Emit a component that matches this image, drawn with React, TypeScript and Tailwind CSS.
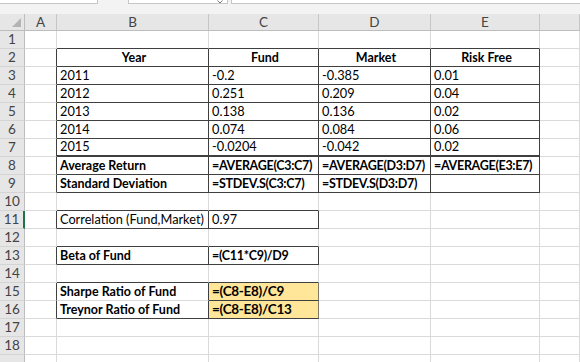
import React from "react";

type Cell = { t?: string; b?: boolean; c?: boolean; fill?: boolean; big?: boolean; f?: boolean };

const COLS = ["A", "B", "C", "D", "E", ""];

const data: Record<number, Record<string, Cell>> = {
  2: { B: { t: "Year", b: true, c: true }, C: { t: "Fund", b: true, c: true }, D: { t: "Market", b: true, c: true }, E: { t: "Risk Free", b: true, c: true } },
  3: { B: { t: "2011" }, C: { t: "-0.2" }, D: { t: "-0.385" }, E: { t: "0.01" } },
  4: { B: { t: "2012" }, C: { t: "0.251" }, D: { t: "0.209" }, E: { t: "0.04" } },
  5: { B: { t: "2013" }, C: { t: "0.138" }, D: { t: "0.136" }, E: { t: "0.02" } },
  6: { B: { t: "2014" }, C: { t: "0.074" }, D: { t: "0.084" }, E: { t: "0.06" } },
  7: { B: { t: "2015" }, C: { t: "-0.0204" }, D: { t: "-0.042" }, E: { t: "0.02" } },
  8: { B: { t: "Average Return", b: true }, C: { t: "=AVERAGE(C3:C7)", b: true, f: true }, D: { t: "=AVERAGE(D3:D7)", b: true, f: true }, E: { t: "=AVERAGE(E3:E7)", b: true, f: true } },
  9: { B: { t: "Standard Deviation", b: true }, C: { t: "=STDEV.S(C3:C7)", b: true, f: true }, D: { t: "=STDEV.S(D3:D7)", b: true, f: true } },
  11: { B: { t: "Correlation (Fund,Market)" }, C: { t: "0.97" } },
  13: { B: { t: "Beta of Fund", b: true }, C: { t: "=(C11*C9)/D9", b: true, f: true } },
  15: { B: { t: "Sharpe Ratio of Fund", b: true }, C: { t: "=(C8-E8)/C9", b: true, fill: true, big: true } },
  16: { B: { t: "Treynor Ratio of Fund", b: true }, C: { t: "=(C8-E8)/C13", b: true, fill: true, big: true } },
};

function rightDark(r: number, c: string): boolean {
  if (r >= 2 && r <= 9) return ["A", "B", "C", "D", "E"].includes(c);
  if (r === 11 || r === 13 || r === 15 || r === 16) return ["A", "B", "C"].includes(c);
  return false;
}
function bottomDark(r: number, c: string): boolean {
  if (r >= 1 && r <= 9) return ["B", "C", "D", "E"].includes(c);
  if (r >= 10 && r <= 14) return ["B", "C"].includes(c);
  if (r === 15) return c === "C";
  if (r === 16) return ["B", "C"].includes(c);
  return false;
}

function GridCell({ r, c }: { r: number; c: string }) {
  const cell = data[r]?.[c];
  const rd = rightDark(r, c);
  const bd = bottomDark(r, c);
  const thick = r === 7 && ["B", "C", "D", "E"].includes(c);
  const orangeRight = cell?.fill;
  const size = cell?.big
    ? "text-[13.5px] tracking-[-0.3px]"
    : cell?.b
    ? cell?.f
      ? "text-[12.5px] tracking-[-0.3px]"
      : "text-[12.5px]"
    : "text-[12.75px]";
  const cls = [
    "flex items-end pb-[1px] overflow-hidden whitespace-nowrap pl-[3px] border-r border-b h-[18px] leading-[15px]",
    orangeRight ? "border-r-[#7f7a68]" : rd ? "border-r-[#3f3f3f]" : "border-r-[#dadada]",
    bd ? "border-b-[#3f3f3f]" : "border-b-[#dadada]",
    thick ? "border-b-2" : "",
    cell?.fill ? "bg-[#ffe699]" : "bg-white",
    cell?.c ? "justify-center" : "",
    cell?.b ? "font-bold" : "",
    size,
  ].join(" ");
  return <div className={cls}>{cell?.t ?? ""}</div>;
}

export default function App() {
  const rows = Array.from({ length: 19 }, (_, i) => i + 1);
  return (
    <div
      className="w-[580px] h-[362px] overflow-hidden bg-white text-black"
      style={{ fontFamily: "Lato, 'Liberation Sans', sans-serif" }}
    >
      {/* top strip */}
      <div className="h-[14px] bg-[#f3f3f3] flex items-start">
        <div className="w-[98px] h-[4px] bg-white border-r border-b border-[#c6c6c6]" />
        <div className="ml-[30px] w-[100px] h-[4px] bg-white border-l border-r border-b border-[#c6c6c6] relative">
          <svg className="absolute left-[88px] top-[0px]" width="6" height="4" viewBox="0 0 6 4">
            <path d="M0.5 0.5 L3 3 L5.5 0.5" fill="none" stroke="#777" strokeWidth="1" />
          </svg>
        </div>
        <div className="ml-[3px] flex-1 h-[4px] bg-white border-l border-b border-[#c6c6c6]" />
      </div>
      <div className="grid grid-cols-[25px_32px_152px_110px_112px_109px_1fr]">
        {/* header row */}
        <div className="h-[17px] bg-[#e6e6e6] border-r border-b border-[#bdbdbd] relative">
          <div className="absolute right-[3px] bottom-[3px] w-0 h-0 border-l-[9px] border-l-transparent border-b-[9px] border-b-[#b4b4b4]" />
        </div>
        {COLS.map((c, i) => (
          <div
            key={i}
            className="h-[17px] bg-[#e6e6e6] border-r border-r-[#c6c6c6] border-b border-b-[#bdbdbd] flex items-center justify-center text-[13.5px] text-[#444]"
          >
            {c}
          </div>
        ))}
        {rows.map((r) => (
          <React.Fragment key={r}>
            <div
              className={
                "h-[18px] bg-[#e6e6e6] border-b border-b-[#d4d4d4] flex items-center justify-center text-[13.5px] text-[#444] " +
                (r === 11 ? "border-r-2 border-r-[#217346]" : "border-r border-r-[#bdbdbd]")
              }
            >
              {r <= 18 ? r : ""}
            </div>
            <GridCell r={r} c="A" />
            <GridCell r={r} c="B" />
            <GridCell r={r} c="C" />
            <GridCell r={r} c="D" />
            <GridCell r={r} c="E" />
            <GridCell r={r} c="F" />
          </React.Fragment>
        ))}
      </div>
    </div>
  );
}
